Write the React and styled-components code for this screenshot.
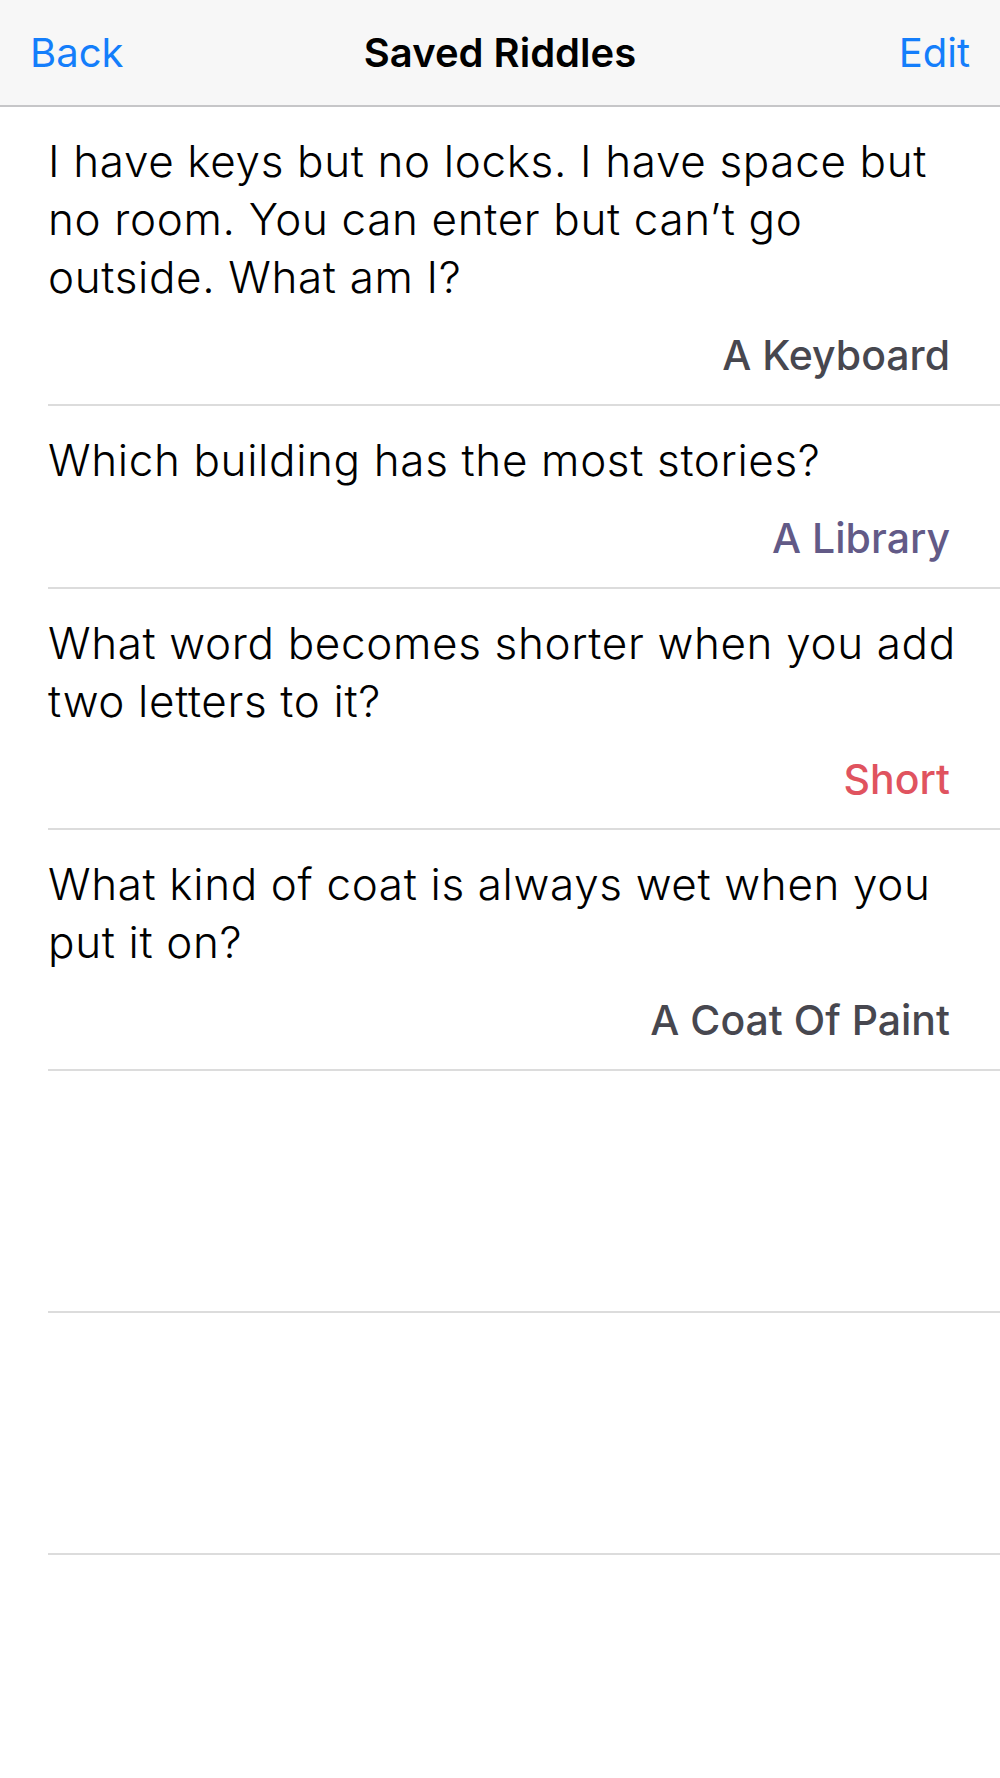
import React from "react";
import styled, { createGlobalStyle } from "styled-components";

const GlobalStyle = createGlobalStyle`
  html, body {
    margin: 0;
    padding: 0;
    background: #fff;
  }
  body {
    font-family: Inter, "Liberation Sans", sans-serif;
    -webkit-font-smoothing: antialiased;
  }
`;

const Screen = styled.div`
  height: 100vh;
  overflow: hidden;
  background: #fff;
`;

const NavBar = styled.header`
  display: grid;
  grid-template-columns: 1fr auto 1fr;
  align-items: center;
  height: 105px;
  padding: 0 30px;
  background: #f7f7f7;
  border-bottom: 2px solid #c6c6c8;
`;

const NavButton = styled.button`
  justify-self: ${(p) => (p.$right ? "end" : "start")};
  border: none;
  background: none;
  padding: 0;
  font-family: inherit;
  font-size: 40px;
  font-weight: 400;
  color: #147efb;
  cursor: pointer;
`;

const NavTitle = styled.h1`
  margin: 0;
  font-size: 40px;
  font-weight: 600;
  color: #000;
`;

const List = styled.ul`
  list-style: none;
  margin: 0;
  padding: 0 0 0 48px;
`;

const Row = styled.li`
  display: flex;
  flex-direction: column;
  padding: 25px 0 25px 0;
  min-height: ${(p) => (p.$empty ? "190px" : "0")};
  border-bottom: 2px solid #dcdcdc;
`;

const Question = styled.p`
  margin: 0 34px 0 0;
  font-size: 44px;
  line-height: 58px;
  font-weight: 300;
  letter-spacing: 0.65px;
  color: #000;
`;

const Answer = styled.span`
  align-self: flex-end;
  margin: 25px 50px 0 0;
  font-size: 41px;
  line-height: 48px;
  font-weight: 500;
  color: ${(p) => p.$color};
`;

const riddles = [
  {
    question:
      "I have keys but no locks. I have space but no room. You can enter but can\u2019t go outside. What am I?",
    answer: "A Keyboard",
    color: "#47474f",
  },
  {
    question: "Which building has the most stories?",
    answer: "A Library",
    color: "#625a87",
  },
  {
    question: "What word becomes shorter when you add two letters to it?",
    answer: "Short",
    color: "#e0535f",
  },
  {
    question: "What kind of coat is always wet when you put it on?",
    answer: "A Coat Of Paint",
    color: "#47474f",
  },
];

const App = () => {
  return (
    <Screen>
      <GlobalStyle />
      <NavBar>
        <NavButton>Back</NavButton>
        <NavTitle>Saved Riddles</NavTitle>
        <NavButton $right>Edit</NavButton>
      </NavBar>
      <List>
        {riddles.map((r) => (
          <Row key={r.answer}>
            <Question>{r.question}</Question>
            <Answer $color={r.color}>{r.answer}</Answer>
          </Row>
        ))}
        <Row $empty />
        <Row $empty />
        <Row $empty />
      </List>
    </Screen>
  );
};

export default App;
